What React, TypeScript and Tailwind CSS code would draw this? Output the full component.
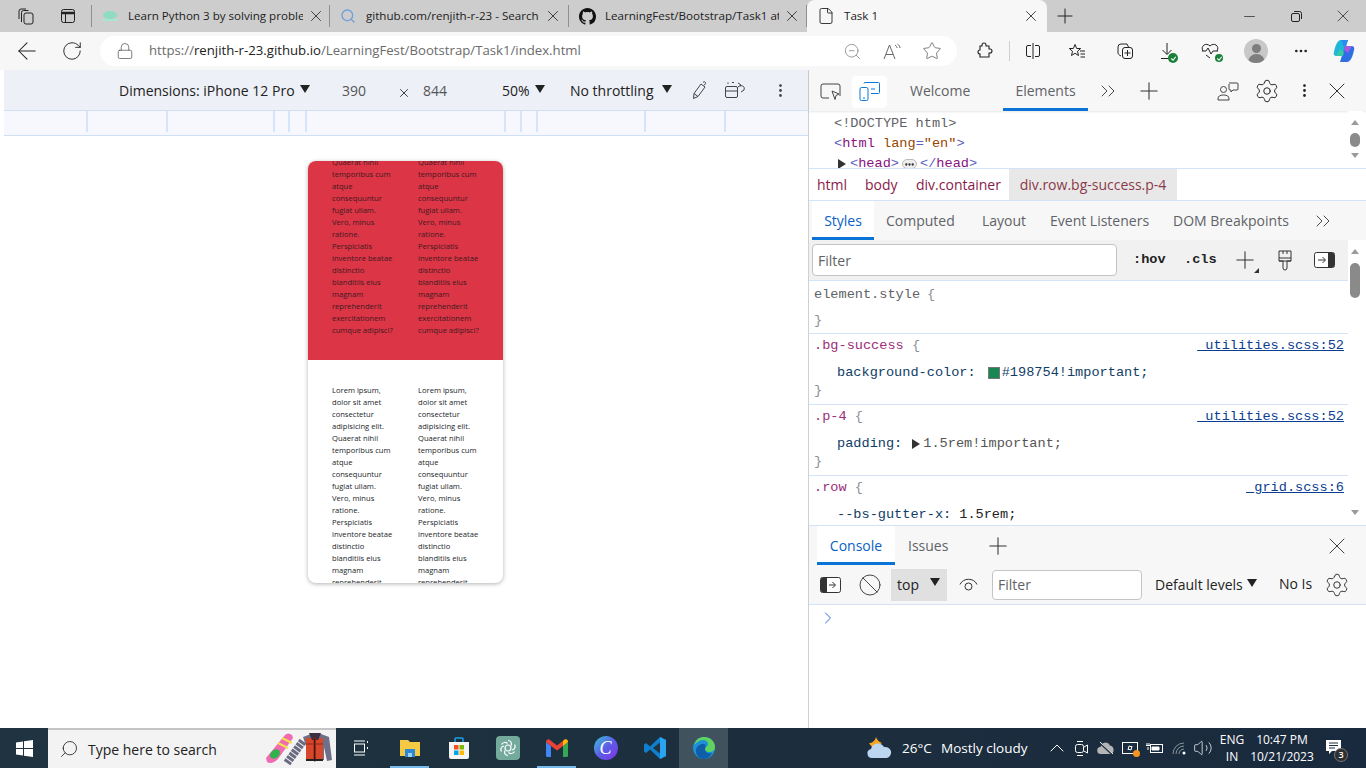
import type { ReactNode } from "react";
import {
  ArrowLeft,
  Ban,
  ChevronRight,
  ChevronUp,
  ChevronsRight,
  File,
  Lock,
  Minus,
  MoreHorizontal,
  MoreVertical,
  Plus,
  RotateCw,
  Search,
  Settings,
  Star,
  Volume2,
  X,
  ZoomOut,
} from "lucide-react";

const UI = "font-['Open_Sans',sans-serif]";
const MONO = "font-['Liberation_Mono',monospace]";

const red = [
  "Quaerat nihil", "temporibus cum", "atque", "consequuntur", "fugiat ullam.", "Vero, minus", "ratione.",
  "Perspiciatis", "inventore beatae", "distinctio", "blanditiis eius", "magnam", "reprehenderit",
  "exercitationem", "cumque adipisci?",
];
const white = [
  "Lorem ipsum,", "dolor sit amet", "consectetur", "adipisicing elit.", "Quaerat nihil", "temporibus cum", "atque",
  "consequuntur", "fugiat ullam.", "Vero, minus", "ratione.", "Perspiciatis", "inventore beatae", "distinctio",
  "blanditiis eius", "magnam", "reprehenderit",
];
const ticks = [84, 80, 107, 15, 17, 199, 16, 16, 108, 80];

function Arrow({ className = "" }: { className?: string }) {
  return <span className={`inline-block h-0 w-0 border-x-[5px] border-t-[8px] border-x-transparent border-t-[#222] ${className}`} />;
}

function Tab({ width, icon, title, close }: { width: number; icon: ReactNode; title: string; close: number }) {
  return (
    <div className="flex h-full shrink-0 items-center" style={{ width }}>
      <div className="ml-[1px] flex w-[34px] shrink-0 justify-center">{icon}</div>
      <span className="ml-[1px] overflow-hidden whitespace-nowrap text-[11.6px] text-[#222]" style={{ width: close }}>{title}</span>
      <X size={18} strokeWidth={1.1} className="ml-[4px] shrink-0 text-[#222]" />
      <div className="ml-auto h-[22px] w-px bg-[#8f8f8f]" />
    </div>
  );
}

function ToolIcon({ w, children }: { w: number; children: ReactNode }) {
  return <div className="flex h-full shrink-0 items-center justify-center text-[#222]" style={{ width: w }}>{children}</div>;
}

function Badge({ size = 10 }: { size?: number }) {
  return (
    <span className="absolute -bottom-[3px] -right-[4px] flex items-center justify-center rounded-full bg-[#188038]" style={{ width: size, height: size }}>
      <svg width="7" height="7" viewBox="0 0 8 8"><path d="M1.500 4l2 2 3-4" fill="none" stroke="#fff" strokeWidth="1.300" /></svg>
    </span>
  );
}

function Copilot() {
  return (
    <svg width="24" height="26" viewBox="0 0 24 26">
      <path d="M9 2h7l-5 16H5c-2.500 0-4-1.500-3-4 1-5 3-12 7-12z" fill="#1fb6d8" />
      <path d="M15 24H8l5-16h6c2.500 0 4 1.500 3 4-1 5-3 12-7 12z" fill="#2f6fe4" />
      <path d="M9 2h7l-3 9z" fill="#2a8cf0" />
      <path d="M4 18h7l1-4-4-3z" fill="#35c9a5" />
      <path d="M20 8h-7l-1 4 4 3z" fill="#a55be0" />
    </svg>
  );
}

function BrowserChrome() {
  return (
    <>
      <div className="flex h-[32px] shrink-0 items-center bg-[#cdcdcd]">
        <ToolIcon w={52}>
          <svg width="16" height="17" viewBox="0 0 16 17" fill="none" stroke="#222" strokeWidth="1"><rect x="6" y="5" width="9" height="11" rx="2" /><path d="M3.500 14V4.500a2 2 0 0 1 2-2h5M1 11V3a2 2 0 0 1 2-2h5" /></svg>
        </ToolIcon>
        <ToolIcon w={32}>
          <svg width="16" height="16" viewBox="0 0 16 16" fill="none" stroke="#222"><rect x="1.500" y="1.500" width="13" height="13" rx="2" /><path d="M1.500 5h13" strokeWidth="2.500" /><path d="M5.500 5v9" /></svg>
        </ToolIcon>
        <div className="ml-[7px] h-[22px] w-px bg-[#8f8f8f]" />
        <Tab
          width={238}
          title="Learn Python 3 by solving proble"
          close={175}
          icon={
            <svg width="18" height="14" viewBox="0 0 18 14"><ellipse cx="9" cy="6" rx="7" ry="4" fill="#8fdcc0" /><path d="M1 11h16" stroke="#a9e6cf" strokeWidth="2" /></svg>
          }
        />
        <Tab width={239} title="github.com/renjith-r-23 - Search" close={174} icon={<Search size={16} className="text-[#6f9fd8]" />} />
        <Tab
          width={238}
          title="LearningFest/Bootstrap/Task1 at"
          close={174}
          icon={
            <svg width="17" height="17" viewBox="0 0 16 16" fill="#111"><path d="M8 0C3.580 0 0 3.580 0 8c0 3.540 2.290 6.530 5.470 7.590.4.070.55-.17.55-.38 0-.19-.01-.82-.01-1.490-2.010.37-2.530-.49-2.690-.94-.09-.23-.48-.94-.82-1.130-.28-.15-.68-.52-.01-.53.63-.01 1.080.58 1.230.82.72 1.210 1.870.87 2.330.66.070-.52.28-.87.51-1.070-1.780-.2-3.640-.89-3.640-3.950 0-.87.31-1.590.82-2.150-.08-.2-.36-1.020.08-2.120 0 0 .67-.21 2.200.82.64-.18 1.320-.27 2-.27s1.360.09 2 .27c1.530-1.040 2.200-.82 2.200-.82.44 1.100.16 1.920.08 2.120.51.56.82 1.270.82 2.150 0 3.070-1.870 3.750-3.650 3.950.29.25.54.73.54 1.480 0 1.070-.01 1.930-.01 2.200 0 .21.15.46.55.38A8.010 8.010 0 0 0 16 8c0-4.420-3.580-8-8-8z" /></svg>
          }
        />
        <div className="flex h-full w-[240px] shrink-0 items-center self-end rounded-t-lg bg-[#f7f7f7] pl-[10px]">
          <File size={18} strokeWidth={1.2} className="text-[#222]" />
          <span className="ml-[9px] w-[178px] text-[11.6px] text-[#222]">Task 1</span>
          <X size={18} strokeWidth={1.1} className="text-[#222]" />
        </div>
        <Plus size={24} strokeWidth={1} className="ml-[6px] text-[#222]" />
        <div className="ml-auto flex h-full">
          <ToolIcon w={47}><Minus size={17} strokeWidth={1} /></ToolIcon>
          <ToolIcon w={47}>
            <svg width="11" height="11" viewBox="0 0 11 11" fill="none" stroke="#222"><rect x="0.500" y="2.500" width="8" height="8" rx="1.500" /><path d="M3 .5h5.500a2 2 0 0 1 2 2V8" /></svg>
          </ToolIcon>
          <ToolIcon w={46}><X size={20} strokeWidth={0.9} /></ToolIcon>
        </div>
      </div>

      <div className="flex h-[38px] shrink-0 items-center bg-[#f7f7f7]">
        <ToolIcon w={54}><ArrowLeft size={28} strokeWidth={0.9} /></ToolIcon>
        <ToolIcon w={36}><RotateCw size={22} strokeWidth={1} /></ToolIcon>
        <div className="ml-[10px] flex h-[30px] w-[857px] shrink-0 items-center rounded-full bg-white">
          <Lock size={18} strokeWidth={0.9} className="ml-[16px] text-[#444]" />
          <span className="ml-[15px] whitespace-nowrap text-[13.2px] text-[#6b6b6b]">
            https://<span className="text-[#222]">renjith-r-23.github.io</span>/LearningFest/Bootstrap/Task1/index.html
          </span>
          <div className="ml-auto flex h-full pr-[5px] text-[#666]">
            <ToolIcon w={40}><ZoomOut size={19} strokeWidth={0.9} className="text-[#777]" /></ToolIcon>
            <ToolIcon w={40}>
              <svg width="18" height="17" viewBox="0 0 18 17" fill="none" stroke="#666"><path d="M1 16L6.500 2 12 16M3 11.500h7M12 2c1.500 1 2 2 2 3M14.500 1c1.500 1 2.500 2.500 2.500 4" /></svg>
            </ToolIcon>
            <ToolIcon w={40}><Star size={20} strokeWidth={0.9} className="text-[#555]" /></ToolIcon>
          </div>
        </div>
        <div className="w-[2px] shrink-0" />
        <ToolIcon w={50}>
          <svg width="18" height="18" viewBox="0 0 18 18" fill="none" stroke="#222" strokeWidth="1.100"><path d="M7 3a2 2 0 0 1 4 0v1h3v3h1a2 2 0 0 1 0 4h-1v4H5v-3a2 2 0 0 1 0-4V4h2z" /></svg>
        </ToolIcon>
        <div className="h-[20px] w-px shrink-0 bg-[#cfcfcf]" />
        <ToolIcon w={46}>
          <svg width="16" height="16" viewBox="0 0 16 16" fill="none" stroke="#222"><path d="M8 0v16M6 2.500H3a1.500 1.500 0 0 0-1.500 1.500v8A1.500 1.500 0 0 0 3 13.500h3M10 2.500h3A1.500 1.500 0 0 1 14.500 4v8a1.500 1.500 0 0 1-1.500 1.500h-3" /></svg>
        </ToolIcon>
        <ToolIcon w={42}>
          <svg width="18" height="17" viewBox="0 0 18 17" fill="none" stroke="#222"><path d="M7 1.500l1.700 4h4l-3.200 2.800 1 4.200L7 10.300 3.500 12.500l1-4.200L1.300 5.500h4zM12 8h5M12.500 11h4.500M12.500 14H17" /></svg>
        </ToolIcon>
        <ToolIcon w={54}>
          <svg width="18" height="18" viewBox="0 0 18 18" fill="none" stroke="#222"><rect x="6.500" y="5.500" width="10" height="11" rx="2.500" /><path d="M11.500 8v6M8.500 11h6M5 14c-2-1-3-2-3-3V5a3 3 0 0 1 3-3h6l1.500 3" /></svg>
        </ToolIcon>
        <ToolIcon w={30}>
          <span className="relative block h-[18px] w-[14px]">
            <svg width="14" height="18" viewBox="0 0 14 18" fill="none" stroke="#222"><path d="M7 1v11M2.500 8L7 12.500 11.500 8M1 16.500h8" /></svg>
            <Badge />
          </span>
        </ToolIcon>
        <ToolIcon w={56}>
          <span className="relative block h-[16px] w-[18px]">
            <svg width="18" height="16" viewBox="0 0 18 16" fill="none" stroke="#222"><path d="M2 8C-1 3 5-1 9 3c4-4 10 0 7 5M1 8h4l2-3 3 6 2-3h5M5 12l4 3" /></svg>
            <Badge size={8} />
          </span>
        </ToolIcon>
        <ToolIcon w={36}>
          <span className="flex h-[24px] w-[24px] flex-col items-center justify-end overflow-hidden rounded-full bg-[#c8c8c8]">
            <span className="h-[9px] w-[9px] rounded-full bg-[#7e7e7e]" />
            <span className="mt-[1px] h-[9px] w-[17px] rounded-t-full bg-[#7e7e7e]" />
          </span>
        </ToolIcon>
        <ToolIcon w={54}><MoreHorizontal size={16} strokeWidth={2} /></ToolIcon>
        <ToolIcon w={32}><Copilot /></ToolIcon>
      </div>
    </>
  );
}

function Column({ lines, className = "" }: { lines: string[]; className?: string }) {
  return (
    <div className={`w-[86px] shrink-0 ${className}`}>
      {lines.map((l, i) => (
        <div key={i} className="h-[12px] whitespace-nowrap text-[7.6px] leading-[12px]">{l}</div>
      ))}
    </div>
  );
}

function Emulator() {
  return (
    <div className="flex w-[808px] shrink-0 bg-white">
      <div className="w-[4px] shrink-0" />
      <div className="flex min-w-0 flex-1 flex-col">
        <div className="flex h-[40px] shrink-0 items-center bg-[#edf0f6] text-[14px] text-[#222]">
          <span className="ml-[115px] w-[181px] whitespace-nowrap">Dimensions: iPhone 12 Pro</span>
          <Arrow className="-mt-[3px]" />
          <span className="ml-[32px] w-[28px] text-[#555]">390</span>
          <X size={14} strokeWidth={1.600} className="ml-[27px] mt-[5px] text-[#333]" />
          <span className="ml-[12px] w-[32px] text-[#555]">844</span>
          <span className="ml-[47px] w-[30px]">50%</span>
          <Arrow className="-mt-[3px] ml-[3px]" />
          <span className="ml-[25px] w-[88px] whitespace-nowrap">No throttling</span>
          <Arrow className="-mt-[3px] ml-[4px]" />
          <svg width="16" height="20" viewBox="0 0 16 20" fill="none" stroke="#444" className="ml-[20px]"><path d="M1.500 18.500l.5-5L9 4l4 3-7 9.500zM11 2.500c1-1.500 3-.5 2.500 1L12 5.500M2 13.500l4 3" /></svg>
          <svg width="22" height="18" viewBox="0 0 22 18" fill="none" stroke="#444" className="ml-[16px]"><rect x="1.500" y="5.500" width="12" height="11" rx="1.500" /><path d="M1.500 10h12M4 3V1.500M8 1.500h2M16 5c3-1 5 1 4 4l-3 2M14 2l3 2-3 2" /></svg>
          <MoreVertical size={17} strokeWidth={2} className="ml-[26px] text-[#444]" />
        </div>
        <div className="flex h-[26px] shrink-0 border-y border-[#cfe0f5] bg-[#f7f8fd] pb-[3px]">
          {ticks.map((w, i) => (
            <div key={i} className="h-full shrink-0 border-r-2 border-[#d5e5f9]" style={{ width: w }} />
          ))}
        </div>
        <div className="min-h-0 flex-1 bg-white pl-[304px] pt-[25px]">
          <div className="flex h-[422px] w-[195px] flex-col overflow-hidden rounded-[8px] bg-white text-[#212529] shadow-[0_1px_4px_rgba(0,0,0,0.3)]">
            <div className="flex h-[199px] shrink-0 overflow-hidden bg-[#dc3545] pl-[24px] text-[#3d1a22]">
              <Column lines={red} className="-mt-[5px]" />
              <Column lines={red} className="-mt-[5px]" />
            </div>
            <div className="flex min-h-0 flex-1 overflow-hidden pl-[24px] pt-[24px]">
              <Column lines={white} />
              <Column lines={white} />
            </div>
          </div>
        </div>
      </div>
    </div>
  );
}

function Punct({ children }: { children: ReactNode }) {
  return <span className="text-[#8a8f98]">{children}</span>;
}

function Rule({ sel, file, children, last = false }: { sel: string; file: string; children: ReactNode; last?: boolean }) {
  return (
    <div className="border-b border-[#d3e3f8] pl-[5px] pr-[4px]">
      <div className="flex h-[24px] items-center justify-between">
        <span><span className="text-[#9b2d7a]">{sel}</span> <Punct>{"{"}</Punct></span>
        <span className="text-[#0b3d91] underline">{file}</span>
      </div>
      <div className="flex h-[29px] items-center pl-[23px] text-[#0f3d66]">{children}</div>
      {!last && <div className="flex h-[17px] items-center pb-[9px]"><Punct>{"}"}</Punct></div>}
    </div>
  );
}

function ScrollArrows({ thumb, thumbH }: { thumb: number; thumbH: number }) {
  return (
    <div className="mr-[3px] flex h-full w-[15px] shrink-0 flex-col items-center justify-between bg-white pb-[10px] pt-[9px]">
      <span className="relative w-full flex-1">
        <span className="absolute left-[3px] top-0 h-0 w-0 border-x-[4px] border-b-[5px] border-x-transparent border-b-[#9a9a9a]" />
        <span className="absolute bottom-0 left-[3px] h-0 w-0 border-x-[4px] border-t-[5px] border-x-transparent border-t-[#9a9a9a]" />
        <span className="absolute left-[2px] w-[10px] rounded-full bg-[#8a8a8a]" style={{ top: thumb, height: thumbH }} />
      </span>
    </div>
  );
}

function DevTools() {
  return (
    <div className={`flex min-w-0 flex-1 flex-col border-l border-[#d0d0d0] bg-white ${UI}`}>
      <div className="flex h-[41px] shrink-0 items-center bg-[#f7f7f7] text-[14px] text-[#5f6368] shadow-[0_1px_2px_rgba(0,0,0,0.1)]">
        <ToolIcon w={43}>
          <svg width="21" height="19" viewBox="0 0 21 19" fill="none" stroke="#444" className="mt-[3px]"><path d="M9 15H3a2 2 0 0 1-2-2V3a2 2 0 0 1 2-2h15a2 2 0 0 1 2 2v10" /><path d="M12 8l7 3-3 1.500-1 4z" /></svg>
        </ToolIcon>
        <div className="mt-[2px] flex h-[32px] w-[35px] items-center justify-center rounded-sm bg-white">
          <svg width="21" height="19" viewBox="0 0 21 19" fill="none" stroke="#0a78d6"><rect x="1" y="5.500" width="8" height="13" rx="1.500" /><path d="M5 1.500a1 1 0 0 1 1-1h13.500a1 1 0 0 1 1 1v9a1 1 0 0 1-1 1H12M12 7h4M4 16h2" /></svg>
        </div>
        <span className="ml-[23px] w-[93px]">Welcome</span>
        <div className="flex h-full w-[85px] items-center justify-center border-b-[3px] border-[#0a74d6] pt-[2px]">Elements</div>
        <ChevronsRight size={24} strokeWidth={0.9} className="ml-[8px] text-[#333]" />
        <Plus size={28} strokeWidth={0.9} className="ml-[15px] text-[#333]" />
        <div className="ml-auto flex h-full pr-[14px]">
          <ToolIcon w={40}>
            <svg width="22" height="20" viewBox="0 0 22 20" fill="none" stroke="#444"><circle cx="6.500" cy="8.500" r="3" /><path d="M1 18c0-3 2-4 5.500-4s5.500 1 5.500 4v1H1zM12 2h8a1 1 0 0 1 1 1v5a1 1 0 0 1-1 1h-4l-2 2V9h-1a1 1 0 0 1-1-1V3" /></svg>
          </ToolIcon>
          <ToolIcon w={38}><Settings size={26} strokeWidth={0.9} /></ToolIcon>
          <ToolIcon w={36}><MoreVertical size={17} strokeWidth={2} /></ToolIcon>
          <ToolIcon w={30}><X size={28} strokeWidth={0.8} /></ToolIcon>
        </div>
      </div>

      <div className={`flex h-[58px] shrink-0 overflow-hidden border-b border-[#d3e3f8] text-[13.6px] leading-[20px] ${MONO}`}>
        <div className="min-w-0 flex-1 pl-[25px] pt-[3px]">
          <div className="text-[#5f6368]">{"<!DOCTYPE html>"}</div>
          <div>
            <span className="text-[#5a5fc0]">{"<"}</span><span className="text-[#881280]">html</span>{" "}
            <span className="text-[#994500]">lang</span><span className="text-[#5a5fc0]">=</span>
            <span className="text-[#994500]">"en"</span><span className="text-[#5a5fc0]">{">"}</span>
          </div>
          <div className="ml-[4px] flex items-center">
            <span className="mr-[4px] h-0 w-0 border-y-[5px] border-l-[8px] border-y-transparent border-l-[#333]" />
            <span className="text-[#5a5fc0]">{"<"}</span><span className="text-[#881280]">head</span><span className="text-[#5a5fc0]">{">"}</span>
            <span className="mx-[3px] flex h-[10px] w-[15px] items-center justify-center rounded-full border border-[#bbb] bg-[#eee]">
              <MoreHorizontal size={11} strokeWidth={3} className="text-[#222]" />
            </span>
            <span className="text-[#5a5fc0]">{"</"}</span><span className="text-[#881280]">head</span><span className="text-[#5a5fc0]">{">"}</span>
          </div>
        </div>
        <ScrollArrows thumb={13} thumbH={14} />
      </div>

      <div className="flex h-[32px] shrink-0 items-center border-b border-[#d3e3f8] text-[14px] text-[#8a1a4a]">
        <span className="ml-[8px] w-[48px]">html</span>
        <span className="w-[51px]">body</span>
        <span className="w-[93px] whitespace-nowrap">div.container</span>
        <div className="flex h-full w-[168px] items-center justify-center whitespace-nowrap bg-[#e8e8e8] text-[#8a3a4a]">div.row.bg-success.p-4</div>
      </div>

      <div className="flex h-[39px] shrink-0 items-center bg-[#f7f7f7] text-[14px] text-[#5f6368]">
        <div className="ml-[3px] flex h-full w-[62px] items-center justify-center border-b-[3px] border-[#0a74d6] bg-white pt-[2px] text-[#0a5fc4]">Styles</div>
        <span className="ml-[12px] w-[96px]">Computed</span>
        <span className="w-[68px]">Layout</span>
        <span className="w-[123px] whitespace-nowrap">Event Listeners</span>
        <span className="w-[141px] whitespace-nowrap">DOM Breakpoints</span>
        <ChevronsRight size={24} strokeWidth={0.9} className="-ml-[3px] text-[#333]" />
      </div>

      <div className="flex min-h-0 flex-1 overflow-hidden">
        <div className="min-w-0 flex-1">
          <div className="flex h-[41px] items-center border-b border-[#d3e3f8] bg-[#f1f1f1]">
            <div className="ml-[3px] flex h-[32px] w-[305px] items-center rounded-[4px] border border-[#c4c4c4] bg-white pl-[5px] text-[14px] text-[#5f6368]">Filter</div>
            <span className={`ml-[16px] w-[51px] text-[13.6px] font-bold text-[#222] ${MONO}`}>:hov</span>
            <span className={`w-[47px] text-[13.6px] font-bold text-[#222] ${MONO}`}>.cls</span>
            <span className="relative block h-[28px] w-[28px]">
              <Plus size={28} strokeWidth={0.9} className="text-[#333]" />
              <span className="absolute bottom-[1px] right-0 h-0 w-0 border-b-[5px] border-l-[5px] border-b-[#333] border-l-transparent" />
            </span>
            <svg width="18" height="21" viewBox="0 0 18 21" fill="none" stroke="#333" className="ml-[17px]"><path d="M3 1h12v10H3zM3 8h12M7 1v3M11 1v3M3 11h4v7a2 2 0 0 0 4 0v-7h4" /></svg>
            <svg width="21" height="16" viewBox="0 0 21 16" className="ml-[20px]"><rect x="0.500" y="0.500" width="20" height="15" rx="2" fill="#fff" stroke="#333" /><path d="M14 1h5a1 1 0 0 1 1 1v12a1 1 0 0 1-1 1h-5z" fill="#333" /><path d="M4 8h7M8.500 5l3 3-3 3" fill="none" stroke="#333" /></svg>
          </div>
          <div className={`text-[13.6px] leading-[16px] ${MONO}`}>
            <div className="h-[53px] border-b border-[#d3e3f8] pl-[5px]">
              <div className="flex h-[26px] items-center pt-[1px] text-[#5f6368]">element.style <span className="ml-[7px]"><Punct>{"{"}</Punct></span></div>
              <div className="flex h-[24px] items-center pt-[4px]"><Punct>{"}"}</Punct></div>
            </div>
            <Rule sel=".bg-success" file="_utilities.scss:52">
              background-color:
              <span className="ml-[12px] h-[12px] w-[12px] border border-[#777] bg-[#198754]" />
              <span className="ml-[2px]">#198754!important;</span>
            </Rule>
            <Rule sel=".p-4" file="_utilities.scss:52">
              padding:
              <span className="ml-[10px] h-0 w-0 border-y-[5px] border-l-[8px] border-y-transparent border-l-[#333]" />
              <span className="ml-[3px] text-[#555]">1.5rem!important;</span>
            </Rule>
            <Rule sel=".row" file="_grid.scss:6" last>
              --bs-gutter-x:<span className="ml-[8px] text-[#222]">1.5rem;</span>
            </Rule>
          </div>
        </div>
        <ScrollArrows thumb={14} thumbH={35} />
      </div>

      <div className="flex h-[40px] shrink-0 items-center border-t border-[#d3e3f8] bg-[#f7f7f7] text-[14px] text-[#5f6368] shadow-[0_1px_2px_rgba(0,0,0,0.1)]">
        <div className="ml-[8px] flex h-full w-[78px] items-center justify-center border-b-[3px] border-[#0a74d6] bg-white pt-[2px] text-[#0a5fc4]">Console</div>
        <span className="ml-[13px] w-[76px]">Issues</span>
        <Plus size={28} strokeWidth={0.9} className="text-[#333]" />
        <X size={28} strokeWidth={0.8} className="ml-auto mr-[15px] text-[#333]" />
      </div>
      <div className="flex h-[40px] shrink-0 items-center border-b border-[#d3e3f8] bg-[#f7f7f7] text-[14px] text-[#222]">
        <svg width="21" height="16" viewBox="0 0 21 16" className="ml-[11px]"><rect x="0.500" y="0.500" width="20" height="15" rx="2" fill="#fff" stroke="#333" /><path d="M7 1H2a1 1 0 0 0-1 1v12a1 1 0 0 0 1 1h5z" fill="#333" /><path d="M9 8h6M12.500 5l3 3-3 3" fill="none" stroke="#333" /></svg>
        <Ban size={24} strokeWidth={0.9} className="ml-[17px] text-[#333]" />
        <div className="ml-[9px] flex h-[32px] w-[56px] items-center bg-[#e0e0e0] pl-[6px]">
          top
          <Arrow className="-mt-[6px] ml-[11px]" />
        </div>
        <svg width="19" height="14" viewBox="0 0 19 14" fill="none" stroke="#333" className="ml-[12px]"><path d="M1 6.500C4-.5 15-.5 18 6.500" /><circle cx="9.500" cy="8.500" r="3.500" /></svg>
        <div className="ml-[14px] flex h-[30px] w-[150px] items-center rounded-[4px] border border-[#c4c4c4] bg-white pl-[5px] text-[#5f6368]">Filter</div>
        <span className="ml-[13px] w-[88px] whitespace-nowrap">Default levels</span>
        <Arrow className="-mt-[3px] ml-[4px]" />
        <span className="ml-[22px] w-[34px] -translate-y-[1px] whitespace-nowrap">No Is</span>
        <Settings size={26} strokeWidth={0.9} className="ml-[11px] text-[#333]" />
      </div>
      <div className="h-[123px] shrink-0 bg-white pl-[9px] pt-[3px]">
        <ChevronRight size={20} strokeWidth={1.200} className="text-[#2a6fe0]" />
      </div>
    </div>
  );
}

function TaskIcon({ children, on = false, active = false }: { children: ReactNode; on?: boolean; active?: boolean }) {
  return (
    <div className={`relative flex h-full w-[49px] shrink-0 items-center justify-center ${active ? "bg-[#3f525e]" : ""}`}>
      {children}
      {on && <span className="absolute bottom-0 left-[5px] right-[5px] h-[2px] bg-[#76b9ed]" />}
    </div>
  );
}

function SearchArt() {
  return (
    <svg width="75" height="38" viewBox="0 0 75 38" className="ml-auto shrink-0">
      <path d="M5 28L24 5q3-3 7 0l1 3-15 21q-6 6-11 3z" fill="#f06bb0" />
      <path d="M17 13l10 5M21 8l10 5" stroke="#f2e24a" strokeWidth="2" />
      <ellipse cx="14" cy="24" rx="5.500" ry="4" transform="rotate(-40 14 24)" fill="#2fb24a" />
      <path d="M26 33L42 11" stroke="#6a6a80" strokeWidth="8" strokeDasharray="3 1" />
      <path d="M42 7l8-3h10l8 3 3 23-5 1-3-14v13H45V16z" fill="#6d7088" />
      <path d="M45 8h17v22H45z" fill="#d9472b" />
      <path d="M48 3h12l-3 7h-6z" fill="#3a3040" />
      <path d="M53 8h1.500v23H53zM45 14h7M55 14h7" stroke="#8c2a1c" />
      <path d="M45 30h17" stroke="#222" strokeWidth="2" />
    </svg>
  );
}

function Taskbar() {
  return (
    <div className={`flex h-[40px] shrink-0 items-center bg-gradient-to-r from-[#1f3440] via-[#1c2f3e] to-[#1a2a3e] text-white ${UI}`}>
      <div className="flex h-full w-[48px] shrink-0 items-center justify-center">
        <svg width="17" height="17" viewBox="0 0 17 17" fill="#fff"><path d="M0 2.500l7-1v6.500H0zM8 1.300L17 0v8H8zM0 9h7v6.500l-7-1zM8 9h9v8l-9-1.300z" /></svg>
      </div>
      <div className="flex h-full w-[288px] shrink-0 items-center overflow-hidden border-t-2 border-[#c5c5c5] bg-[#f3f3f3] text-[#222]">
        <Search size={20} strokeWidth={1} className="ml-[11px] -scale-x-100" />
        <span className="ml-[9px] whitespace-nowrap text-[14px]">Type here to search</span>
        <SearchArt />
      </div>
      <div className="flex h-full w-[49px] shrink-0 items-center justify-center">
        <svg width="16" height="18" viewBox="0 0 16 18" fill="none" stroke="#fff"><rect x="1.500" y="5" width="10" height="8" /><path d="M1 2h11M1 16h11M14.500 2v2M14.500 8v2" /></svg>
      </div>
      <TaskIcon on>
        <svg width="22" height="20" viewBox="0 0 22 20"><path d="M1 2h8l2 2h10v14H1z" fill="#f6c945" /><path d="M6 11h10v8H6z" fill="#2b88d8" /><path d="M9 15h4v4H9z" fill="#9fd0f0" /></svg>
      </TaskIcon>
      <TaskIcon>
        <svg width="24" height="24" viewBox="0 0 24 24"><path d="M2 6h20v15a2 2 0 0 1-2 2H4a2 2 0 0 1-2-2z" fill="#f4f4f4" /><path d="M8 6V3a1 1 0 0 1 1-1h6a1 1 0 0 1 1 1v3" fill="none" stroke="#1ba1e2" strokeWidth="1.500" /><rect x="7" y="9" width="4.500" height="4.500" fill="#f25022" /><rect x="12.500" y="9" width="4.500" height="4.500" fill="#7fba00" /><rect x="7" y="14.500" width="4.500" height="4.500" fill="#00a4ef" /><rect x="12.500" y="14.500" width="4.500" height="4.500" fill="#ffb900" /></svg>
      </TaskIcon>
      <TaskIcon>
        <span className="flex h-[24px] w-[24px] items-center justify-center rounded-[4px] bg-[#74aa9c]">
          <svg width="18" height="18" viewBox="0 0 18 18" fill="none" stroke="#fff" strokeWidth="1.200"><circle cx="9" cy="9" r="3" /><path d="M9 1.500c3 0 4 3 3 5M15.500 5.500c1.500 2.500 0 5-2.500 5.500M15.500 12.500c-1.500 2.500-4.500 2.500-6 1M9 16.500c-3 0-4-3-3-5M2.500 12.500c-1.500-2.500 0-5 2.500-5.500M2.500 5.500C4 3 7 3 8.500 4.500" /></svg>
        </span>
      </TaskIcon>
      <TaskIcon on>
        <svg width="22" height="18" viewBox="0 0 22 18"><path d="M0 3l5 4v11H1.500A1.500 1.500 0 0 1 0 16.500z" fill="#4285f4" /><path d="M22 3l-5 4v11h3.500a1.500 1.500 0 0 0 1.500-1.500z" fill="#34a853" /><path d="M0 3c0-2.500 2.500-3.500 4-2l7 5.500L18 1c1.500-1.500 4-.5 4 2l-5 4-6 4.500L5 7z" fill="#ea4335" /><path d="M18 1c1.500-1.500 4-.5 4 2l-5 4V2z" fill="#fbbc04" /></svg>
      </TaskIcon>
      <TaskIcon>
        <span className="flex h-[24px] w-[24px] items-center justify-center rounded-full bg-gradient-to-br from-[#19c3d6] via-[#5a5ce6] to-[#7d2ae8] font-['Liberation_Serif',serif] text-[18px] italic leading-none text-white">C</span>
      </TaskIcon>
      <TaskIcon>
        <svg width="24" height="24" viewBox="0 0 24 24"><path d="M17 1l6 3v16l-6 3-10-9.500L3 17l-2-1.500v-7L3 7l4 3.500z" fill="#0e80ce" /><path d="M17 6.500L10 12l7 5.500z" fill="#1f3440" /><path d="M17 1l6 3v16l-6 3z" fill="#2aa3f0" /></svg>
      </TaskIcon>
      <TaskIcon active>
        <svg width="24" height="24" viewBox="0 0 24 24"><circle cx="12" cy="12" r="11" fill="#1f8fd8" /><path d="M2 9C4 3 8 1 12 1c6 0 11 4 11 10 0 4-3 5-6 5-2 0-4-1-4-3 0-3 3-2 3-5 0-2-2-4-5-4S5 6 2 9z" fill="#5fd35f" /><path d="M13 13c0 4 4 5 7 4-2 4-5 6-8 6-5 0-8-4-8-8 0-5 4-7 7-7s3 2 2 5z" fill="#0f5ea8" /></svg>
      </TaskIcon>

      <div className="ml-auto flex h-full items-center">
        <svg width="26" height="24" viewBox="0 0 26 24"><path d="M9 1c1 3 3 5 6 6l-8 5c-2-1-4-3-5-5 3 0 6-2 7-6z" fill="#f5a623" /><path d="M5 22a4.500 4.500 0 0 1-1-8.900 7 7 0 0 1 13-2A5.500 5.500 0 0 1 20 22z" fill="#bcd6ef" /></svg>
        <span className="ml-[9px] w-[39px] whitespace-nowrap text-[13.5px]">26°C</span>
        <span className="w-[100px] whitespace-nowrap text-[13.5px]">Mostly cloudy</span>
        <ChevronUp size={24} strokeWidth={1} className="ml-[4px]" />
        <svg width="13" height="17" viewBox="0 0 13 17" fill="none" stroke="#fff" className="ml-[6px]"><rect x="0.500" y="4.500" width="8" height="8" rx="2" /><path d="M9 7l3.500-2v8L9 11M2 1.500h6M2 15.500h6" /></svg>
        <svg width="18" height="15" viewBox="0 0 18 15" className="ml-[9px]"><path d="M4 13a3.500 3.500 0 0 1-.5-7 5 5 0 0 1 9.500-1.500 4.500 4.500 0 0 1 1 8.500z" fill="#b5b5b5" /><path d="M2 1l14 13" stroke="#1c2f3e" strokeWidth="2" /><path d="M3 1l13 12" stroke="#eee" /></svg>
        <span className="relative ml-[7px] block h-[17px] w-[18px]">
          <svg width="16" height="15" viewBox="0 0 16 15" fill="none" stroke="#fff"><rect x="0.500" y="2.500" width="15" height="11" /><path d="M6 10l1-4 3 1M10 6l-1 4-3-1" /></svg>
          <span className="absolute bottom-0 right-0 h-[7px] w-[7px] rounded-full bg-[#f7941d]" />
        </span>
        <svg width="17" height="12" viewBox="0 0 17 12" fill="none" stroke="#fff" className="ml-[6px]"><rect x="4.500" y="2.500" width="12" height="8" /><path d="M6 5h7v3H6z" fill="#fff" /><path d="M0 3.500h4M1 1v3M3 1v3M2 5v3" /></svg>
        <svg width="15" height="13" viewBox="0 0 15 13" fill="none" stroke="#8a949c" className="ml-[9px]"><path d="M1 12a11 11 0 0 1 11-11M4 12a8 8 0 0 1 8-8M7 12a5 5 0 0 1 5-5" /><circle cx="12" cy="11" r="1.500" fill="#fff" stroke="none" /></svg>
        <Volume2 size={20} strokeWidth={0.9} className="ml-[6px]" />
        <div className="ml-[1px] flex w-[36px] flex-col items-center text-[12px] leading-[17px]"><span>ENG</span><span>IN</span></div>
        <div className="flex w-[64px] flex-col items-center whitespace-nowrap text-[12px] leading-[17px]"><span>10:47 PM</span><span>10/21/2023</span></div>
        <span className="relative ml-[12px] mr-[25px] block h-[17px] w-[15px]">
          <svg width="15" height="15" viewBox="0 0 15 15"><path d="M0 0h15v11H6l-3 3v-3H0z" fill="#fff" /><path d="M3 3h9M3 5.500h9M3 8h6" stroke="#1c2f3e" /></svg>
          <span className="absolute -bottom-[5px] -right-[7px] flex h-[14px] w-[14px] items-center justify-center rounded-full border border-[#777] bg-[#2f2f2f] text-[9px] font-semibold">3</span>
        </span>
      </div>
    </div>
  );
}

export default function App() {
  return (
    <div className={`flex h-[768px] w-[1366px] flex-col overflow-hidden bg-white ${UI}`}>
      <BrowserChrome />
      <div className="flex min-h-0 flex-1">
        <Emulator />
        <DevTools />
      </div>
      <Taskbar />
    </div>
  );
}
